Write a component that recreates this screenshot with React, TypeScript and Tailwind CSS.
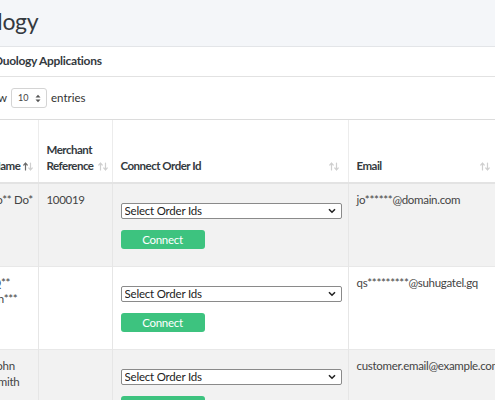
import React from "react";

type Row = {
  name: string[];
  reference: string;
  email: string;
};

const rows: Row[] = [
  { name: ["Jo** Do*"], reference: "100019", email: "jo******@domain.com" },
  { name: ["Q**", "Sn***"], reference: "", email: "qs*********@suhugatel.gq" },
  { name: ["John", "Smith"], reference: "", email: "customer.email@example.com" },
];

function SortIcon({ active = false }: { active?: boolean }) {
  return (
    <svg width="10" height="9" viewBox="0 0 10 9" className="shrink-0">
      <g fill="none" strokeWidth="1.2" strokeLinecap="round" strokeLinejoin="round">
        <g stroke={active ? "#6b6b6b" : "#cfcfcf"}>
          <path d="M2.5 8V1.2" />
          <path d="M0.8 3 2.5 1.2 4.2 3" />
        </g>
        <g stroke="#cfcfcf">
          <path d="M7.5 1v6.8" />
          <path d="M5.8 6 7.5 7.8 9.2 6" />
        </g>
      </g>
    </svg>
  );
}

function OrderSelect() {
  return (
    <div className="relative w-[221px]">
      <select className="block h-[16px] w-full appearance-none rounded-[2px] border border-[#8a8a8a] bg-white pl-[3px] text-[11.5px] leading-[14px] tracking-[-0.2px] text-[#222]">
        <option>Select Order Ids</option>
      </select>
      <svg
        width="8"
        height="6"
        viewBox="0 0 8 6"
        className="pointer-events-none absolute right-[6px] top-[5px]"
      >
        <path d="M1 1.2 4 4.2 7 1.2" fill="none" stroke="#222" strokeWidth="1.6" />
      </svg>
    </div>
  );
}

export default function App() {
  return (
    <div
      className="h-[400px] w-[495px] overflow-hidden bg-white text-[#212529]"
      style={{ fontFamily: "Lato, 'Noto Sans', sans-serif" }}
    >
      {/* page title */}
      <div className="h-[47px] border-b border-[#e3e5e8] bg-[#f4f6f9]">
        <h1 className="-ml-[45px] pt-[6px] text-[23px] leading-[30px] font-normal tracking-[-0.3px] text-[#343a40]">
          Duology
        </h1>
      </div>

      {/* card header */}
      <div className="h-[30px] border-b border-[#e2e2e2]">
        <h3 className="-ml-[6px] text-[12px] leading-[28px] font-bold tracking-[-0.3px] text-[#343a40]">
          Duology Applications
        </h3>
      </div>

      {/* length menu */}
      <div className="flex h-[43px] items-center gap-[4px] border-b border-[#dcdcdc] -ml-[21px] text-[11.5px] text-[#333]">
        <span>Show</span>
        <div className="flex h-[20px] w-[36px] items-center justify-between rounded-[3px] border border-[#d4d4d4] bg-white pl-[6px] pr-[5px]">
          <span className="text-[9px] text-[#444]">10</span>
          <svg width="6" height="9" viewBox="0 0 6 9">
            <path d="M0.5 3.5 3 0.8 5.5 3.5Z M0.5 5.5 3 8.2 5.5 5.5Z" fill="#555" />
          </svg>
        </div>
        <span>entries</span>
      </div>

      {/* table */}
      <table className="-ml-[16px] w-[514px] table-fixed border-collapse text-[11.5px] leading-[16px] tracking-[-0.3px] text-[#444]">
        <colgroup>
          <col className="w-[54px]" />
          <col className="w-[74px]" />
          <col className="w-[236px]" />
          <col className="w-[150px]" />
        </colgroup>
        <thead>
          <tr className="h-[63px] border-b-2 border-[#e3e3e3] tracking-[-0.5px]">
            <th className="border-r border-[#ececec] px-2 pb-[8px] align-bottom text-left font-bold text-[#343a40]">
              <div className="flex items-center gap-[3px] whitespace-nowrap">
                <span>Name</span>
                <SortIcon active />
              </div>
            </th>
            <th className="border-r border-[#ececec] px-2 pb-[8px] align-bottom text-left font-bold text-[#343a40]">
              <div>Merchant</div>
              <div className="flex items-center gap-[4px] whitespace-nowrap">
                <span>Reference</span>
                <SortIcon />
              </div>
            </th>
            <th className="border-r border-[#ececec] px-2 pb-[8px] align-bottom text-left font-bold text-[#343a40]">
              <div className="flex items-center justify-between pr-[1px]">
                <span>Connect Order Id</span>
                <SortIcon />
              </div>
            </th>
            <th className="px-2 pb-[8px] align-bottom text-left font-bold text-[#343a40]">
              <div className="flex items-center justify-between">
                <span>Email</span>
                <SortIcon />
              </div>
            </th>
          </tr>
        </thead>
        <tbody>
          {rows.map((row, i) => (
            <tr
              key={i}
              className={`border-b border-[#e8e8e8] ${i % 2 === 0 ? "bg-[#f2f2f2]" : "bg-white"}`}
            >
              <td className="border-r border-[#e6e6e6] px-2 pt-[8px] align-top whitespace-nowrap">
                {row.name.map((line) => (
                  <div key={line}>{line}</div>
                ))}
              </td>
              <td className="border-r border-[#e6e6e6] px-2 pt-[8px] align-top">{row.reference}</td>
              <td className="border-r border-[#e6e6e6] px-2 pt-[19px] pb-[17px] align-top">
                <OrderSelect />
                <button className="mt-[11px] block h-[19px] w-[84px] rounded-[3px] bg-[#3dc37f] text-[11.5px] leading-[19px] text-white">
                  Connect
                </button>
              </td>
              <td className="px-2 pt-[8px] align-top whitespace-nowrap">{row.email}</td>
            </tr>
          ))}
        </tbody>
      </table>
    </div>
  );
}
